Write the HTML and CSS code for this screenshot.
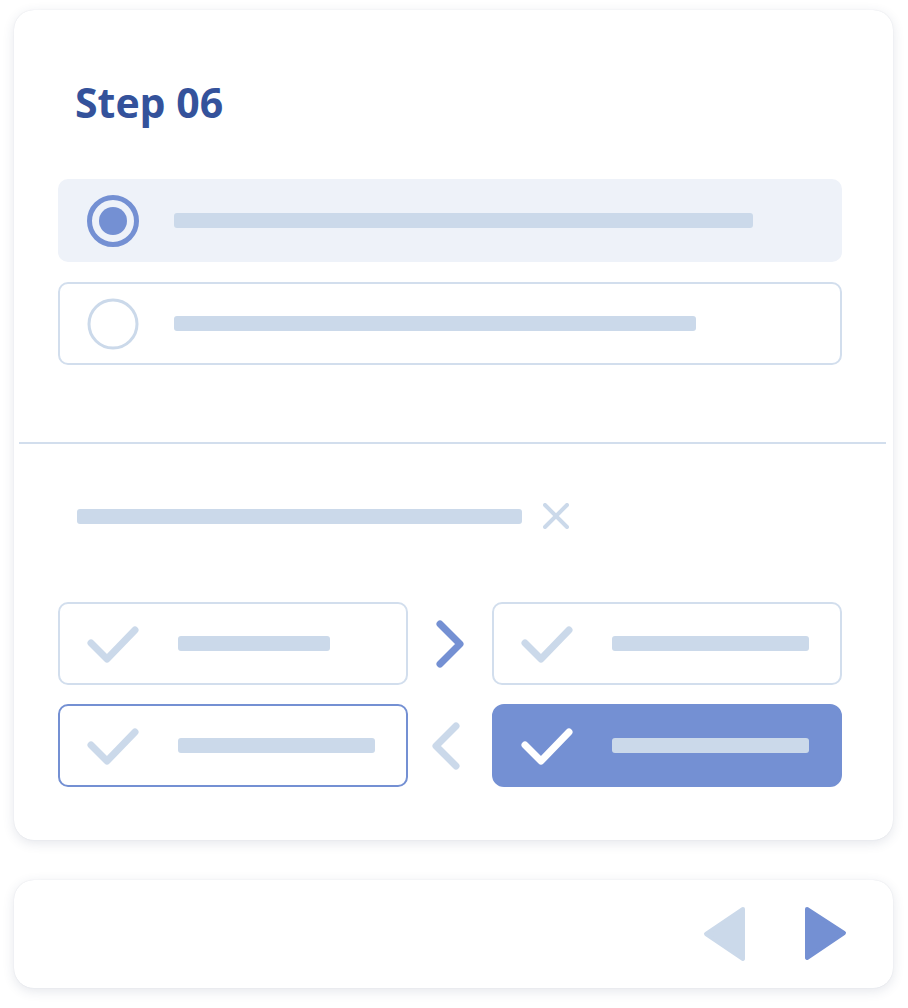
FILE: index.html
```html
<!DOCTYPE html>
<html lang="en">

<head>
  <meta charset="UTF-8" />
  <meta name="viewport" content="width=device-width, initial-scale=1.0" />
  <title>Step 06</title>
  <link rel="stylesheet" href="styles.css">
</head>

<body>
  <section class="card">
    <div class="card-top">
      <h1 class="step-title">Step 06</h1>

      <div class="options">
        <div class="option option-selected">
          <svg class="radio" width="52" height="52" viewBox="0 0 52 52">
            <circle cx="26" cy="26" r="23.5" fill="none" stroke="#7490d3" stroke-width="5" />
            <circle cx="26" cy="26" r="14" fill="#7490d3" />
          </svg>
          <span class="bar" style="width: 579px"></span>
        </div>
        <div class="option">
          <svg class="radio" width="52" height="52" viewBox="0 0 52 52">
            <circle cx="26" cy="26" r="24" fill="none" stroke="#cbd9ea" stroke-width="3" />
          </svg>
          <span class="bar" style="width: 522px"></span>
        </div>
      </div>
    </div>

    <hr class="divider">

    <div class="card-bottom">
      <div class="clear-row">
        <span class="bar" style="width: 445px"></span>
        <svg class="clear-icon" width="26" height="26" viewBox="0 0 26 26">
          <path d="M2 2 L24 24 M24 2 L2 24" stroke="#cbd9ea" stroke-width="4" stroke-linecap="round" />
        </svg>
      </div>

      <div class="match-grid">
        <div class="match">
          <svg class="check" width="54" height="40" viewBox="0 0 54 40">
            <path d="M5 19 L21 35 L49 6" fill="none" stroke="#cbd9ea" stroke-width="7" stroke-linecap="round" stroke-linejoin="round" />
          </svg>
          <span class="bar" style="width: 152px"></span>
        </div>
        <div class="arrow">
          <svg width="30" height="50" viewBox="0 0 30 50">
            <path d="M5 5 L25 25 L5 45" fill="none" stroke="#7490d3" stroke-width="7" stroke-linecap="round" stroke-linejoin="round" />
          </svg>
        </div>
        <div class="match">
          <svg class="check" width="54" height="40" viewBox="0 0 54 40">
            <path d="M5 19 L21 35 L49 6" fill="none" stroke="#cbd9ea" stroke-width="7" stroke-linecap="round" stroke-linejoin="round" />
          </svg>
          <span class="bar" style="width: 197px"></span>
        </div>

        <div class="match match-active">
          <svg class="check" width="54" height="40" viewBox="0 0 54 40">
            <path d="M5 19 L21 35 L49 6" fill="none" stroke="#cbd9ea" stroke-width="7" stroke-linecap="round" stroke-linejoin="round" />
          </svg>
          <span class="bar" style="width: 197px"></span>
        </div>
        <div class="arrow arrow-back">
          <svg width="30" height="50" viewBox="0 0 30 50">
            <path d="M25 5 L5 25 L25 45" fill="none" stroke="#cbd9ea" stroke-width="7" stroke-linecap="round" stroke-linejoin="round" />
          </svg>
        </div>
        <div class="match match-filled">
          <svg class="check" width="54" height="40" viewBox="0 0 54 40">
            <path d="M5 19 L21 35 L49 6" fill="none" stroke="#ffffff" stroke-width="7" stroke-linecap="round" stroke-linejoin="round" />
          </svg>
          <span class="bar" style="width: 197px"></span>
        </div>
      </div>
    </div>
  </section>

  <footer class="card pager">
    <button class="pager-btn" aria-label="Previous">
      <svg width="44" height="56" viewBox="0 0 44 56">
        <path d="M40 3 L3 28 L40 53 Z" fill="#cbd9ea" stroke="#cbd9ea" stroke-width="4" stroke-linejoin="round" />
      </svg>
    </button>
    <button class="pager-btn" aria-label="Next">
      <svg width="44" height="56" viewBox="0 0 44 56">
        <path d="M3 3 L40 27 L3 52 Z" fill="#7490d3" stroke="#7490d3" stroke-width="4" stroke-linejoin="round" />
      </svg>
    </button>
  </footer>
</body>

</html>
```

FILE: styles.css
```css
body {
  margin: 0;
  padding: 10px 15px 20px 14px;
  background-color: #fff;
  font-family: "Open Sans", "Noto Sans", sans-serif;
}

.card {
  background-color: #fff;
  border-radius: 20px;
  box-shadow: 0 3px 12px rgba(50, 60, 100, 0.13), 0 0 1px rgba(50, 60, 100, 0.15);
}

.card-top {
  padding: 68px 51px 0 44px;
}

.step-title {
  margin: 0 0 53px 17px;
  font-size: 41px;
  line-height: 48px;
  font-weight: 700;
  color: #34529b;
}

.options {
  display: flex;
  flex-direction: column;
  gap: 20px;
}

.option {
  display: flex;
  align-items: center;
  gap: 35px;
  height: 83px;
  box-sizing: border-box;
  padding-left: 27px;
  border: 2px solid #d2deed;
  border-radius: 10px;
}

.option-selected {
  background-color: #eef2f9;
  border-color: transparent;
}

.bar {
  display: block;
  height: 15px;
  border-radius: 3px;
  background-color: #cbd9ea;
}

.divider {
  margin: 77px 7px 0 5px;
  height: 2px;
  border: none;
  background-color: #d2deed;
}

.card-bottom {
  padding: 59px 51px 53px 44px;
}

.clear-row {
  display: flex;
  align-items: center;
  gap: 21px;
  height: 26px;
  padding-left: 19px;
}

.match-grid {
  margin-top: 73px;
  display: grid;
  grid-template-columns: 350px 84px 350px;
  grid-auto-rows: 83px;
  row-gap: 19px;
}

.match {
  display: flex;
  align-items: center;
  gap: 38px;
  box-sizing: border-box;
  padding-left: 26px;
  border: 2px solid #d2deed;
  border-radius: 10px;
}

.match-active {
  border-color: #7490d3;
}

.match-filled {
  background-color: #7490d3;
  border-color: #7490d3;
  border-radius: 12px;
}

.arrow {
  display: flex;
  align-items: center;
  justify-content: center;
}

.arrow-back {
  padding-right: 8px;
}

.pager {
  margin-top: 40px;
  height: 108px;
  display: flex;
  align-items: center;
  justify-content: flex-end;
  gap: 57px;
  padding-right: 45px;
}

.pager-btn {
  display: flex;
  padding: 0;
  border: none;
  background: transparent;
  cursor: pointer;
}
```
